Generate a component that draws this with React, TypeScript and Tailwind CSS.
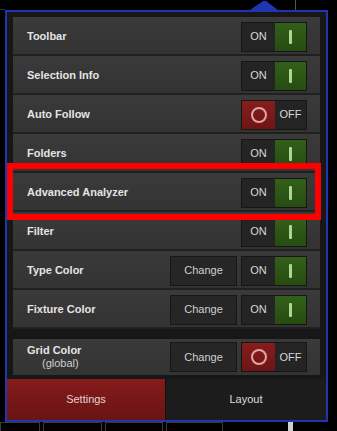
import React from "react";

const font = { fontFamily: '"Liberation Sans", Arial, sans-serif' };

function OnToggle() {
  return (
    <div className="flex h-[30px] w-[66px] border border-[#161616] shrink-0">
      <div className="flex w-[33px] items-center justify-center bg-[#242424] text-[11px] text-[#d8d8d8]">ON</div>
      <div className="flex flex-1 items-center justify-center bg-gradient-to-b from-[#326019] to-[#264c12]">
        <div className="h-[14px] w-[3px] rounded-[1px] bg-[#a9d88e]" />
      </div>
    </div>
  );
}

function OffToggle() {
  return (
    <div className="flex h-[30px] w-[66px] border border-[#161616] shrink-0">
      <div className="flex w-[33px] items-center justify-center bg-gradient-to-b from-[#861d1d] to-[#6e1515]">
        <div className="h-[16px] w-[16px] rounded-full border-2 border-[#e2a4a4]" />
      </div>
      <div className="flex flex-1 items-center justify-center bg-[#242424] text-[11px] text-[#d8d8d8]">OFF</div>
    </div>
  );
}

function ChangeBtn() {
  return (
    <div className="flex h-[30px] w-[67px] items-center justify-center border border-[#161616] bg-[#262626] text-[11px] text-[#cfcfcf] shrink-0">
      Change
    </div>
  );
}

function Row({ label, on, change }: { label: string; on: boolean; change?: boolean }) {
  return (
    <div className="flex h-[39px] items-center border-b-2 border-[#202020] bg-gradient-to-b from-[#3a3a3a] to-[#333333] pl-[14px] pr-[13px] pt-[2px]">
      <div className="flex-1 text-[11px] font-bold text-[#e4e4e4]">{label}</div>
      <div className="flex gap-[4px]">
        {change && <ChangeBtn />}
        {on ? <OnToggle /> : <OffToggle />}
      </div>
    </div>
  );
}

export default function App() {
  return (
    <div className="relative h-[431px] w-[337px] overflow-hidden bg-black" style={font}>
      {/* top strip */}
      <div className="relative h-[10px]">
        <div className="absolute left-[295px] top-0 h-[10px] w-px bg-[#555]" />
        <svg className="absolute left-[249px] top-0" width="30" height="10" viewBox="0 0 30 10">
          <polygon points="1,10 14,1 17,1 29,10" fill="#1f36b0" />
        </svg>
        <div className="absolute left-0 top-[9px] h-px w-[5px] bg-[#333]" />
      </div>
      {/* popup */}
      <div className="ml-[5px] flex h-[412px] w-[323px] flex-col border-2 border-[#1f36b0] bg-[#171717]">
        <div className="px-[6px] pt-[5px]">
          <Row label="Toolbar" on />
          <Row label="Selection Info" on />
          <Row label="Auto Follow" on={false} />
          <Row label="Folders" on />
          <Row label="Advanced Analyzer" on />
          <Row label="Filter" on />
          <Row label="Type Color" on change />
          <Row label="Fixture Color" on change />
          <div className="mt-[10px] flex h-[36px] items-center bg-gradient-to-b from-[#3a3a3a] to-[#333333] pl-[14px] pr-[13px]">
            <div className="flex flex-1 flex-col leading-[13px]">
              <span className="text-[11px] font-bold text-[#e4e4e4]">Grid Color</span>
              <span className="pl-[15px] text-[11px] text-[#cfcfcf]">(global)</span>
            </div>
            <div className="flex gap-[4px]">
              <ChangeBtn />
              <OffToggle />
            </div>
          </div>
        </div>
        <div className="mt-[4px] flex flex-1">
          <div className="flex w-[158px] items-center justify-center bg-gradient-to-b from-[#861b1b] to-[#6a1313] text-[11px] text-[#e2d2d2]">
            Settings
          </div>
          <div className="flex flex-1 items-center justify-center border-l border-[#111] bg-[#1c1c1c] text-[11px] text-[#dcdcdc]">
            Layout
          </div>
        </div>
      </div>
      {/* bottom background buttons */}
      <div className="flex h-[9px] gap-[3px]">
        <div className="w-[40px] border-x border-t border-[#3a3a3a]" />
        <div className="w-[59px] border-x border-t border-[#3a3a3a]" />
        <div className="w-[58px] border-x border-t border-[#3a3a3a]" />
        <div className="w-[57px] border-x border-t border-[#3a3a3a]" />
        <div className="ml-[62px] w-[5px] bg-[#d0d0d0]" />
      </div>
      {/* red highlight */}
      <div className="absolute left-[7px] top-[163px] h-[57px] w-[314px] border-[6px] border-[#ff0000]" />
    </div>
  );
}
